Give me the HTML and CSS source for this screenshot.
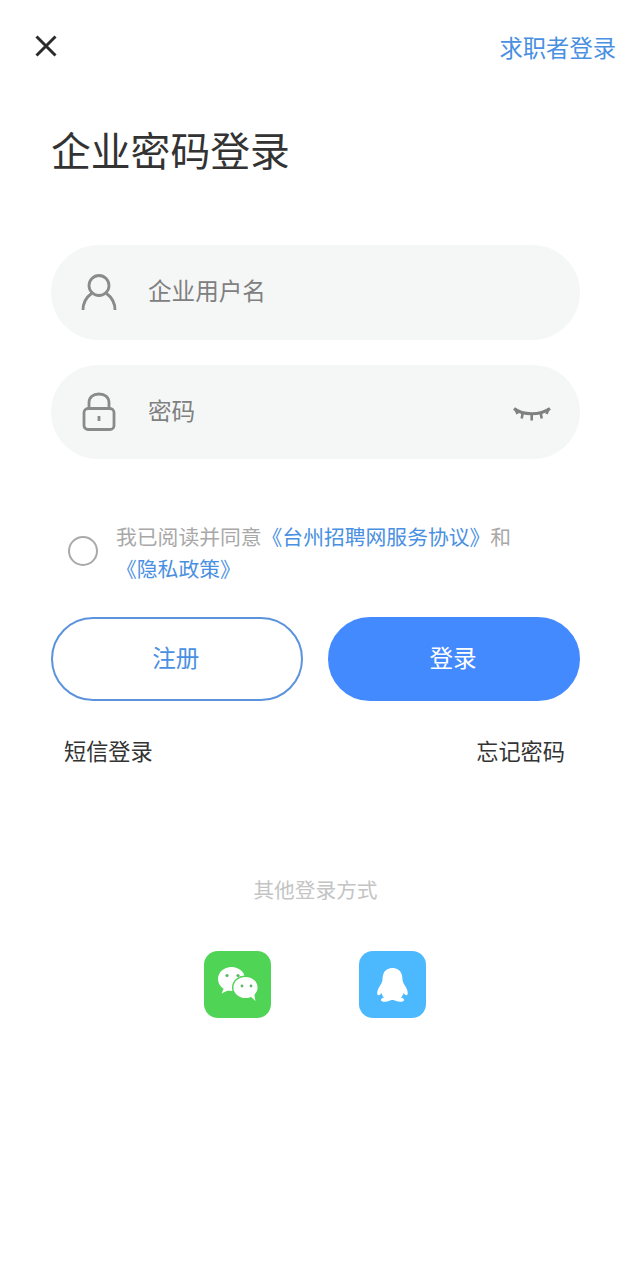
FILE: index.html

```html
<!DOCTYPE html>
<html lang="zh-CN">
<head>
  <meta charset="UTF-8" />
  <title>企业密码登录</title>
  <meta name="viewport" content="width=device-width, initial-scale=1" />
  <link rel="stylesheet" href="styles.css">
</head>
<body>
  <header class="topbar">
    <svg class="close" width="26" height="26" viewBox="0 0 26 26"><path d="M3.5 3.5 L22.5 22.5 M22.5 3.5 L3.5 22.5" /></svg>
    <a class="switch">求职者登录</a>
  </header>

  <main>
    <h1>企业密码登录</h1>

    <div class="field">
      <svg class="field-icon" width="36" height="38" viewBox="0 0 36 38">
        <circle cx="18" cy="12.5" r="10" />
        <path d="M2 37 C2 30 5 24.5 10.5 20.5 M34 37 C34 30 31 24.5 25.5 20.5" />
      </svg>
      <span class="placeholder">企业用户名</span>
    </div>

    <div class="field second">
      <svg class="field-icon" width="36" height="40" viewBox="0 0 36 40">
        <rect x="3" y="16.5" width="30" height="21" rx="4" />
        <path d="M8 16.5 V11 C8 5 12 2 18 2 C24 2 28 5 28 11 V16.5" />
        <path d="M18 24 V29" />
      </svg>
      <span class="placeholder">密码</span>
      <svg class="eye" width="38" height="18" viewBox="0 0 38 18">
        <path class="lid" d="M1 5.5 C10 12.5 27 12.5 37 5.5" />
        <path d="M2.5 6 L4.5 11 M9.7 10 L8.7 15.5 M18.7 11 V17.5 M27.7 10 L28.7 15.5 M35.5 6 L33.5 11" />
      </svg>
    </div>

    <div class="agree">
      <span class="radio"></span>
      <p>我已阅读并同意<a>《台州招聘网服务协议》</a>和<br><a>《隐私政策》</a></p>
    </div>

    <div class="buttons">
      <button class="btn outline">注册</button>
      <button class="btn solid">登录</button>
    </div>

    <div class="links">
      <a>短信登录</a>
      <a>忘记密码</a>
    </div>

    <p class="other">其他登录方式</p>

    <div class="social">
      <span class="social-btn wechat">
        <svg width="67" height="67" viewBox="0 0 67 67">
          <ellipse class="bubble" cx="27.5" cy="28" rx="13.5" ry="12" />
          <path class="bubble" d="M20 37 L17.5 42.5 L26 38.5 Z" />
          <ellipse class="bubble ring" cx="41.5" cy="36.5" rx="12.8" ry="11.3" />
          <path class="bubble" d="M46 45 L51.5 50 L50 42 Z" />
          <circle class="dot" cx="23" cy="24.5" r="1.6" />
          <circle class="dot" cx="34" cy="24.5" r="1.6" />
          <circle class="dot" cx="38" cy="35" r="1.4" />
          <circle class="dot" cx="47" cy="35" r="1.4" />
        </svg>
      </span>
      <span class="social-btn qq">
        <svg width="67" height="67" viewBox="0 0 67 67">
          <path class="bubble" d="M33.5 17 C26.5 17 23.5 22 23.5 28.5 C23.5 31 22 33 20.5 35.5 C18.5 39 17.5 42.5 18.8 44 C20 44.8 21.5 43.5 22.5 42 C23 44 24 45.5 25 46.5 C23 47 21.5 48 22 49.5 C22.8 51.2 27.5 51 30 50 C31.5 49.4 32.5 49 33.5 49 C34.5 49 35.5 49.4 37 50 C39.5 51 44.2 51.2 45 49.5 C45.5 48 44 47 42 46.5 C43 45.5 44 44 44.5 42 C45.5 43.5 47 44.8 48.2 44 C49.5 42.5 48.5 39 46.5 35.5 C45 33 43.5 31 43.5 28.5 C43.5 22 40.5 17 33.5 17 Z" />
        </svg>
      </span>
    </div>
  </main>
</body>
</html>
```

FILE: styles.css

```css
* {
  box-sizing: border-box;
}
body {
  font-family: "Noto Sans CJK SC", "Noto Sans", sans-serif;
  margin: 0;
  background: #ffffff;
  color: #333333;
}
.topbar {
  display: flex;
  justify-content: space-between;
  align-items: flex-start;
  padding: 32px 14px 0 33px;
}
.close {
  margin-top: 1px;
}
.close path {
  fill: none;
  stroke: #2b2b2b;
  stroke-width: 3;
}
.switch {
  margin-top: 1px;
  font-size: 23.3px;
  line-height: 28px;
  color: #4a90e2;
}
main {
  padding: 0 50px 0 51px;
}
h1 {
  margin: 58px 0 0;
  font-size: 39.8px;
  line-height: 60px;
  font-weight: 400;
  color: #333333;
}
.field {
  display: flex;
  align-items: center;
  height: 94.5px;
  margin-top: 66px;
  padding: 0 29px 0 30px;
  background: #f5f7f7;
  border-radius: 48px;
}
.second {
  margin-top: 25px;
}
.field-icon {
  flex: none;
  margin-right: 31px;
}
.field-icon * {
  fill: none;
  stroke: #8a8a8a;
  stroke-width: 2.8;
}
.placeholder {
  flex: 1;
  padding-bottom: 4px;
  font-size: 23.6px;
  color: #808080;
}
.eye path {
  fill: none;
  stroke: #808080;
  stroke-width: 2.6;
}
.eye .lid {
  stroke-width: 3.2;
}
.agree {
  display: flex;
  align-items: center;
  margin-top: 61px;
  padding-left: 17px;
}
.radio {
  flex: none;
  width: 30px;
  height: 30px;
  margin: 0 18px 2px 0;
  border: 2px solid #a9a9a9;
  border-radius: 50%;
}
.agree p {
  margin: 0;
  font-size: 20.8px;
  line-height: 32px;
  color: #a8a8a8;
}
.agree a {
  color: #4a90e2;
}
.buttons {
  display: flex;
  gap: 25.5px;
  margin-top: 33px;
}
.btn {
  flex: 1;
  height: 84px;
  padding: 0 2px 4px 0;
  font-family: inherit;
  font-size: 23.6px;
  border-radius: 42px;
}
.outline {
  background: #ffffff;
  border: 2px solid #5b93dd;
  color: #4a90e2;
}
.solid {
  background: #448aff;
  border: 2px solid #448aff;
  color: #ffffff;
}
.links {
  display: flex;
  justify-content: space-between;
  margin-top: 32px;
  padding: 0 15px 0 13px;
  font-size: 22.2px;
  line-height: 34px;
  color: #333333;
}
.other {
  margin: 106px 0 0;
  text-align: center;
  font-size: 20.7px;
  line-height: 32px;
  color: #c4c4c4;
}
.social {
  display: flex;
  justify-content: center;
  gap: 88px;
  margin-top: 46px;
  padding-right: 2px;
}
.social-btn {
  display: flex;
  width: 67px;
  height: 67px;
  border-radius: 14px;
}
.wechat {
  background: #50d455;
}
.qq {
  background: #4cb9fe;
}
.bubble {
  fill: #ffffff;
}
.ring {
  stroke: #50d455;
  stroke-width: 1.5;
}
.dot {
  fill: #5cb765;
}
```
